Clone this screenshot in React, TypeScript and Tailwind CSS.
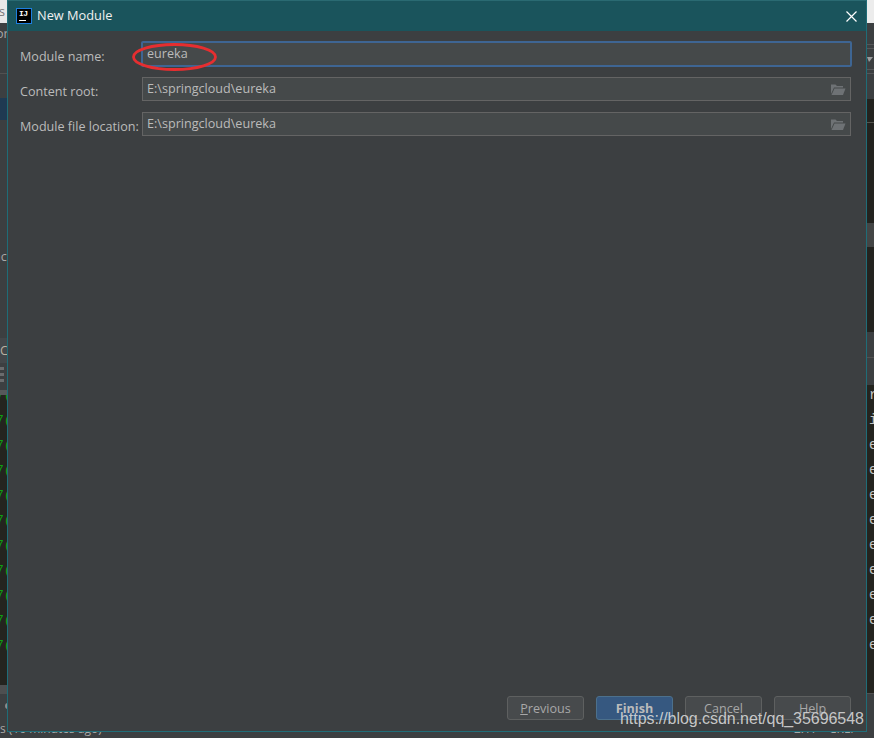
const sans = "font-['Open_Sans','Noto_Sans',sans-serif]";

function FolderIcon() {
  return (
    <svg width="16" height="12" viewBox="0 0 16 12" className="absolute right-[4px] top-[6px]">
      <path d="M1 0.5 L5.5 0.5 L7 2 L13 2 L13 3.5 L4 3.5 L1 10 Z" fill="#6e7275" />
      <path d="M4.5 4.5 L15.5 4.5 L13 11 L1.5 11 Z" fill="#6e7275" />
    </svg>
  );
}

function IdeaLogo() {
  return (
    <div className="flex h-[16px] w-[16px] flex-col border border-[#1e7fe0] bg-black pl-[2px] pt-[1px]">
      <span className="font-['Liberation_Mono',monospace] text-[8px] font-bold leading-[8px] tracking-[-0.5px] text-white">IJ</span>
      <span className="mt-[2px] h-[1px] w-[7px] bg-white" />
    </div>
  );
}

function Field({ label, value, focused, top }: { label: string; value: string; focused?: boolean; top: string }) {
  return (
    <div className={`flex items-start ${top}`}>
      <span className={`w-[122px] shrink-0 whitespace-nowrap text-[12.6px] leading-[18px] text-[#bbbbbb] ${focused ? "pt-[7px]" : "pt-[6px]"}`}>{label}</span>
      {focused ? (
        <div className="-ml-[1px] flex h-[26px] w-[711px] items-center rounded-[2px] border-[2px] border-[#3e6593] bg-[#45494a] pl-[4px] text-[12.6px] text-[#bbbbbb]">
          {value}
        </div>
      ) : (
        <div className="relative flex h-[24px] w-[709px] items-center border border-[#646464] bg-[#45494a] pl-[4px] text-[12.6px] text-[#bbbbbb]">
          {value}
          <FolderIcon />
        </div>
      )}
    </div>
  );
}

function Btn({ children, primary }: { children: React.ReactNode; primary?: boolean }) {
  return (
    <div
      className={`flex h-[24px] w-[77px] items-center justify-center rounded-[3px] border pt-[2px] text-[12.6px] ${
        primary
          ? "border-[#4c708c] bg-[#365880] font-bold text-[#bbbbbb]"
          : "border-[#5e6060] bg-[#474a4c] text-[#a8a8a8]"
      }`}
    >
      {children}
    </div>
  );
}

export default function App() {
  const rows = [0, 1, 2, 3, 4, 5, 6, 7, 8, 9, 10];
  return (
    <div className={`relative flex h-[738px] w-[874px] overflow-hidden bg-[#3c3f41] ${sans}`}>
      {/* IDE behind the dialog: left strip */}
      <div className="flex w-[7px] shrink-0 flex-col overflow-hidden whitespace-nowrap text-[12.6px] text-[#a8a8a8]">
        <div className="h-[23px] bg-[#e8e8e8] pt-[2px] leading-[20px] text-[#777777]"><span className="-ml-[1px] block">s</span></div>
        <div className="h-[50px] bg-[#3c3f41] leading-[22px]"><span className="-ml-[4px] block">or</span></div>
        <div className="h-[25px] border-t border-[#515151] bg-[#3c3f41]" />
        <div className="h-[22px] bg-[#1f3a52]" />
        <div className="h-[218px] bg-[#3c3f41] pt-[128px] leading-[18px]"><span className="-ml-[7px] block">nc</span></div>
        <div className="h-[25px] bg-[#43474a] leading-[26px]"><span className="block text-[#b8b0a0]">C</span></div>
        <div className="flex h-[27px] flex-col gap-[3px] bg-[#3c3f41] pt-[4px]">
          <div className="h-[3px] w-[4px] bg-[#6a6c6e]" />
          <div className="h-[3px] w-[4px] bg-[#6a6c6e]" />
          <div className="h-[3px] w-[4px] bg-[#6a6c6e]" />
        </div>
        <div className="h-[5px] bg-[#56595a]" />
        <div className="h-[290px] overflow-hidden bg-[#24241f]">
          <div className="-mt-[12px]">
            {rows.map((i) => (
              <div key={i} className="-ml-[4px] h-[25px] font-['Liberation_Mono',monospace] text-[13px] leading-[25px] text-[#10a010]">
                7(
              </div>
            ))}
          </div>
        </div>
        <div className="h-[9px] bg-[#4d4f50]" />
        <div className="flex-1 bg-[#3c3f41] pt-[9px]">
          <div className="ml-[5px] h-[6px] w-[3px] rounded-l-full bg-[#8a8c8e]" />
        </div>
      </div>

      {/* IDE behind the dialog: right strip */}
      <div className="absolute right-0 top-0 flex h-full w-[7px] flex-col overflow-hidden">
        <div className="h-[23px] bg-[#ececec]" />
        <div className="h-[21px] bg-[#3c3f41]" />
        <div className="h-[1px] bg-[#555759]" />
        <div className="h-[3px] bg-[#3c3f41]" />
        <div className="h-[1px] bg-[#555759]" />
        <div className="h-[20px] bg-[#3c3f41] pt-[8px]">
          <svg width="6" height="5" viewBox="0 0 6 5" className="block">
            <path d="M0 0 L6 0 L2 5 Z" fill="#9a9c9e" />
          </svg>
        </div>
        <div className="h-[1px] bg-[#555759]" />
        <div className="h-[3px] bg-[#3c3f41]" />
        <div className="h-[1px] bg-[#555759]" />
        <div className="h-[25px] bg-[#3c3f41]" />
        <div className="h-[23px] bg-[#23231f]" />
        <div className="h-[1px] bg-[#55554f]" />
        <div className="h-[100px] bg-[#23231f]" />
        <div className="h-[24px] bg-[#434545]" />
        <div className="h-[85px] bg-[#23231f]" />
        <div className="h-[25px] bg-[#3c3f41]" />
        <div className="h-[28px] border-t border-[#515151] bg-[#3c3f41]" />
        <div className="h-[308px] overflow-hidden bg-[#24241f]">
          <div className="-mt-[2px]">
            {["r", "i", "e", "e", "e", "e", "e", "e", "e", "e", "e"].map((c, i) => (
              <div key={i} className="h-[25px] pl-[2px] font-['Liberation_Mono',monospace] text-[14px] leading-[25px] text-[#c4c4c4]">
                {c}
              </div>
            ))}
          </div>
        </div>
        <div className="h-[1px] bg-[#515151]" />
        <div className="flex-1 bg-[#3c3f41]" />
      </div>

      {/* Status bar text, half hidden by the dialog */}
      <span className="absolute left-0 top-[720px] whitespace-nowrap text-[12px] leading-[18px] text-[#a8a8a8]">s (16 minutes ago)</span>
      <span className="absolute left-[794px] top-[720px] whitespace-nowrap text-[12px] leading-[18px] text-[#a8a8a8]">2:17</span>
      <span className="absolute left-[829px] top-[720px] whitespace-nowrap text-[12px] leading-[18px] text-[#a8a8a8]">CRLF</span>

      {/* Dialog */}
      <div className="absolute left-[7px] top-0 flex h-[732px] w-[860px] flex-col border border-t-0 border-[#1f6d78] bg-[#3c3f41]">
        <div className="flex h-[31px] shrink-0 items-center border-t border-[#2a6a72] bg-[#1a545c] pl-[8px] pr-[9px]">
          <IdeaLogo />
          <span className="ml-[5px] text-[12.8px] text-[#f0f0f0]">New Module</span>
          <svg width="11" height="11" viewBox="0 0 11 11" className="ml-auto" stroke="#ffffff" strokeWidth="1.2">
            <path d="M0.5 0.5 L10.5 10.5 M10.5 0.5 L0.5 10.5" />
          </svg>
        </div>
        <div className="flex flex-1 flex-col pl-[12px]">
          <Field label="Module name:" value="eureka" focused top="mt-[10px]" />
          <Field label="Content root:" value="E:\springcloud\eureka" top="mt-[10px]" />
          <Field label="Module file location:" value="E:\springcloud\eureka" top="mt-[11px]" />
          <div className="mt-auto mb-[11px] mr-[15px] flex justify-end gap-[12px]">
            <Btn><span><span className="underline">P</span>revious</span></Btn>
            <Btn primary>Finish</Btn>
            <Btn>Cancel</Btn>
            <Btn>Help</Btn>
          </div>
        </div>
      </div>

      {/* Red annotation ellipse */}
      <svg width="90" height="34" viewBox="0 0 90 34" className="absolute left-[130px] top-[41px]" fill="none">
        <ellipse cx="44.5" cy="16" rx="41" ry="12.5" stroke="#e62e30" strokeWidth="2.8" />
      </svg>

      {/* Watermark */}
      <span className="absolute left-[620px] top-[709px] whitespace-nowrap font-['Liberation_Sans',sans-serif] text-[16px] leading-[20px] tracking-[-0.05px] text-[#d8d8d8]/90">
        https://blog.csdn.net/qq_35696548
      </span>
    </div>
  );
}
